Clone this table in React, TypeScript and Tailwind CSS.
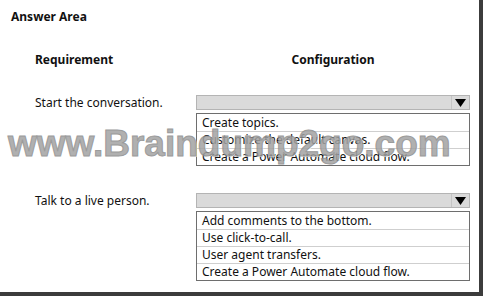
import React from "react";

const startOptions = [
  "Create topics.",
  "Customize the default canvas.",
  "Create a Power Automate cloud flow.",
];

const liveOptions = [
  "Add comments to the bottom.",
  "Use click-to-call.",
  "User agent transfers.",
  "Create a Power Automate cloud flow.",
];

const Dropdown = ({ options }: { options: string[] }) => {
  return (
    <div className="flex w-[274px] flex-col">
      <div className="flex h-[15px] border border-[#b4b4b4] bg-[#dadada]">
        <div className="flex-1" />
        <div className="flex w-[18px] items-center justify-center border-l border-[#c4c4c4]">
          <svg width="11" height="8" viewBox="0 0 11 8">
            <path d="M0 0 H11 L5.5 8 Z" fill="#000" />
          </svg>
        </div>
      </div>
      <div className="mt-[3px] flex flex-col border border-[#6e6e6e] bg-white">
        {options.map((o, i) => (
          <div
            key={i}
            className={
              "flex h-[17px] items-center pl-[5px] text-[12px] text-[#111] " +
              (i > 0 ? "border-t border-[#cfcfcf]" : "")
            }
          >
            {o}
          </div>
        ))}
      </div>
    </div>
  );
};

export default function App() {
  return (
    <div className="h-[296px] w-[483px] bg-[#3c3c3c] pb-[4px] pr-[4px] font-['Noto_Sans',sans-serif]">
      <div className="relative h-full w-full overflow-hidden bg-white">
        <p className="pl-[11px] pt-[9px] text-[12px] font-bold leading-[16px] text-[#111]">
          Answer Area
        </p>
        <div className="mt-[27px] grid grid-cols-[161px_274px] pl-[35px] text-[12px] font-bold leading-[16px] text-[#111]">
          <p>Requirement</p>
          <p className="text-center">Configuration</p>
        </div>
        <div className="mt-[27px] grid grid-cols-[161px_274px] pl-[35px]">
          <p className="text-[12px] leading-[16px] text-[#111]">
            Start the conversation.
          </p>
          <Dropdown options={startOptions} />
        </div>
        <div className="mt-[27px] grid grid-cols-[161px_274px] pl-[35px]">
          <p className="text-[12px] leading-[16px] text-[#111]">
            Talk to a live person.
          </p>
          <Dropdown options={liveOptions} />
        </div>

        <div className="pointer-events-none absolute left-[8px] top-[124px] whitespace-nowrap font-['Liberation_Sans',sans-serif] text-[37px] font-bold leading-[40px] text-[#a3a3a3] opacity-85 [-webkit-text-stroke:1px_#8a8a8a] [text-shadow:1px_1px_0_#ffffff]">
          www.Braindump2go.com
        </div>
      </div>
    </div>
  );
}
